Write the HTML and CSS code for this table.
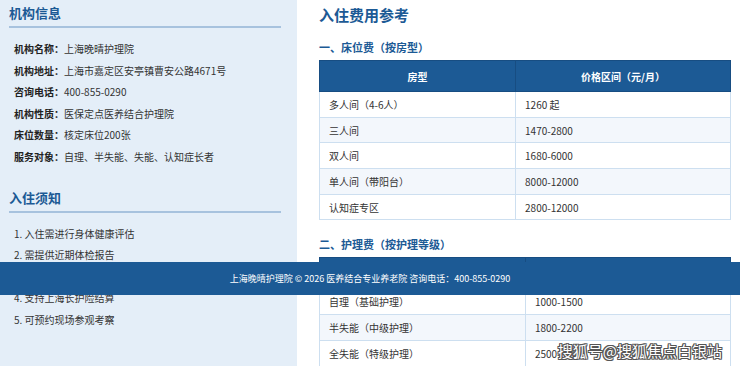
FILE: index.html
```html
<!DOCTYPE html>
<html lang="zh-CN">
<head>
<meta charset="utf-8">
<title>上海晚晴护理院</title>
<link rel="stylesheet" href="styles.css">
</head>
<body>
<div class="page">
  <aside class="side">
    <h2 class="side-title">机构信息</h2>
    <ul class="info">
      <li><b>机构名称：</b>上海晚晴护理院</li>
      <li><b>机构地址：</b>上海市嘉定区安亭镇曹安公路4671号</li>
      <li><b>咨询电话：</b>400-855-0290</li>
      <li><b>机构性质：</b>医保定点医养结合护理院</li>
      <li><b>床位数量：</b>核定床位200张</li>
      <li><b>服务对象：</b>自理、半失能、失能、认知症长者</li>
    </ul>
    <h2 class="side-title second">入住须知</h2>
    <ol class="notes">
      <li>1. 入住需进行身体健康评估</li>
      <li>2. 需提供近期体检报告</li>
      <li>3. 签订入住协议并缴纳押金</li>
      <li>4. 支持上海长护险结算</li>
      <li>5. 可预约现场参观考察</li>
    </ol>
  </aside>
  <main class="main">
    <h1 class="main-title">入住费用参考</h1>
    <h3 class="sub">一、床位费（按房型）</h3>
    <table class="fee">
      <thead><tr><th class="c-room">房型</th><th>价格区间（元/月）</th></tr></thead>
      <tbody>
        <tr><td>多人间（4-6人）</td><td>1260 起</td></tr>
        <tr><td>三人间</td><td>1470-2800</td></tr>
        <tr><td>双人间</td><td>1680-6000</td></tr>
        <tr><td>单人间（带阳台）</td><td>8000-12000</td></tr>
        <tr><td>认知症专区</td><td>2800-12000</td></tr>
      </tbody>
    </table>
    <h3 class="sub second">二、护理费（按护理等级）</h3>
    <table class="fee">
      <thead><tr><th class="c-care">护理等级</th><th>价格区间（元/月）</th></tr></thead>
      <tbody>
        <tr><td>自理（基础护理）</td><td>1000-1500</td></tr>
        <tr><td>半失能（中级护理）</td><td>1800-2200</td></tr>
        <tr><td>全失能（特级护理）</td><td>2500-3500</td></tr>
      </tbody>
    </table>
  </main>
</div>
<footer class="footer">上海晚晴护理院 © 2026 医养结合专业养老院 咨询电话：400-855-0290</footer>
<div class="watermark">搜狐号@搜狐焦点白银站</div>
</body>
</html>
```
FILE: styles.css
```css
html, body {
  margin: 0;
  padding: 0;
  height: 100%;
  overflow: hidden;
}
body {
  font-family: "Noto Sans CJK SC", "Noto Sans", sans-serif;
  color: #333;
  background: #fff;
  position: relative;
}
.page {
  display: flex;
  min-height: 366px;
}
.side {
  width: 297px;
  flex: none;
  box-sizing: border-box;
  background: #e4eef8;
  padding: 4px 16px 0 9px;
}
.side-title {
  margin: 0;
  font-size: 13px;
  line-height: 17px;
  font-weight: 700;
  color: #1c5a95;
  padding-bottom: 5px;
  border-bottom: 2px solid #a7c2de;
}
.side-title.second {
  margin-top: 21px;
}
.info, .notes {
  list-style: none;
  margin: 10px 0 0;
  padding: 0 0 0 5px;
  font-size: 10px;
  line-height: 21.6px;
  color: #333;
}
.info b {
  font-weight: 700;
  color: #222;
}
.main {
  flex: 1;
  padding: 5px 9px 0 22px;
}
.main-title {
  margin: 0;
  font-size: 15px;
  line-height: 20px;
  font-weight: 700;
  color: #1c5a95;
}
.sub {
  margin: 15px 0 5px;
  font-size: 11px;
  line-height: 15px;
  font-weight: 700;
  color: #1c5a95;
}
.sub.second {
  margin-top: 17px;
}
.fee {
  width: 100%;
  border-collapse: collapse;
  font-size: 10px;
}
.fee th {
  background: #1c5a95;
  color: #fff;
  font-weight: 700;
  height: 30px;
  padding: 0 9px;
  border: 1px solid #174d82;
  text-align: center;
}
.fee th.c-room {
  width: 47.7%;
}
.fee th.c-care {
  width: 50.1%;
}
.fee td {
  height: 25.7px;
  padding: 0 9px;
  border: 1px solid #cddff0;
  box-sizing: border-box;
}
.fee tbody tr:nth-child(even) td {
  background: #f3f7fc;
}
.footer {
  position: absolute;
  left: 0;
  right: 0;
  top: 262px;
  height: 33px;
  line-height: 33px;
  background: #1c5a95;
  color: #fff;
  font-size: 9px;
  text-align: center;
}
.watermark {
  position: absolute;
  right: 18px;
  bottom: 6px;
  font-size: 15px;
  line-height: 18px;
  color: #fff;
  text-shadow: -1px 0 #555, 1px 0 #555, 0 -1px #555, 0 1px #555, 1px 1px #555, -1px -1px #555, 1px -1px #555, -1px 1px #555;
}
```
